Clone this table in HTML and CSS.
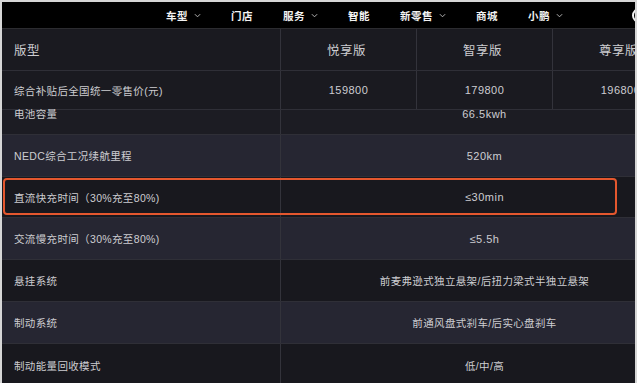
FILE: index.html
```html
<!DOCTYPE html>
<html lang="zh-CN">
<head>
<meta charset="utf-8">
<title>参数配置</title>
<link rel="stylesheet" href="styles.css">
</head>
<body>
<div class="frame">
  <nav class="nav">
    <span class="nav-item">车型<svg class="chev" viewBox="0 0 8 5"><polyline points="1,1 4,4 7,1"/></svg></span>
    <span class="nav-item">门店</span>
    <span class="nav-item">服务<svg class="chev" viewBox="0 0 8 5"><polyline points="1,1 4,4 7,1"/></svg></span>
    <span class="nav-item">智能</span>
    <span class="nav-item">新零售<svg class="chev" viewBox="0 0 8 5"><polyline points="1,1 4,4 7,1"/></svg></span>
    <span class="nav-item">商城</span>
    <span class="nav-item">小鹏<svg class="chev" viewBox="0 0 8 5"><polyline points="1,1 4,4 7,1"/></svg></span>
    <span class="nav-icon"></span>
  </nav>
  <div class="table">
    <div class="row cols head">
      <div class="cell label big">版型</div>
      <div class="cell val big">悦享版</div>
      <div class="cell val big">智享版</div>
      <div class="cell val big">尊享版</div>
    </div>
    <div class="row cols price">
      <div class="cell label">综合补贴后全国统一零售价(元)</div>
      <div class="cell val num">159800</div>
      <div class="cell val num">179800</div>
      <div class="cell val num">196800</div>
    </div>
    <div class="row span battery">
      <div class="cell label">电池容量</div>
      <div class="cell val num">66.5kwh</div>
    </div>
    <div class="row span light">
      <div class="cell label">NEDC综合工况续航里程</div>
      <div class="cell val num">520km</div>
    </div>
    <div class="row span dark hl">
      <div class="cell label">直流快充时间（30%充至80%)</div>
      <div class="cell val num">≤30min</div>
      <div class="highlight"></div>
    </div>
    <div class="row span light">
      <div class="cell label">交流慢充时间（30%充至80%)</div>
      <div class="cell val num">≤5.5h</div>
    </div>
    <div class="row span dark">
      <div class="cell label">悬挂系统</div>
      <div class="cell val">前麦弗逊式独立悬架/后扭力梁式半独立悬架</div>
    </div>
    <div class="row span light">
      <div class="cell label">制动系统</div>
      <div class="cell val">前通风盘式刹车/后实心盘刹车</div>
    </div>
    <div class="row span dark last">
      <div class="cell label">制动能量回收模式</div>
      <div class="cell val">低/中/高</div>
    </div>
  </div>
</div>
</body>
</html>
```
FILE: styles.css
```css
* { box-sizing: border-box; }
html, body {
  margin: 0;
  padding: 0;
  background: #18181e;
}
body {
  font-family: "Liberation Sans", "Noto Sans CJK SC", sans-serif;
  color: #cdcdd1;
}
.frame {
  width: 637px;
  height: 383px;
  overflow: hidden;
  border-top: 2px solid #d6d6d6;
  border-left: 2px solid #d6d6d6;
  border-right: 2px solid #d6d6d6;
  background: #18181e;
}
.nav {
  height: 27px;
  background: #000;
  border-bottom: 1px solid #2c2c30;
  display: flex;
  align-items: center;
  gap: 30px;
  padding-left: 164px;
  overflow: hidden;
}
.nav-item {
  display: flex;
  align-items: center;
  gap: 6px;
  color: #f2f2f2;
  font-size: 10.5px;
  font-weight: 700;
  letter-spacing: 0.5px;
  white-space: nowrap;
}
.chev {
  width: 7px;
  height: 5px;
  fill: none;
  stroke: #b8b8b8;
  stroke-width: 1.1;
}
.nav-icon {
  margin-left: auto;
  margin-right: -12px;
  width: 15px;
  height: 15px;
  border-radius: 50%;
  border: 2px solid #f4f4f4;
  flex: none;
}
.table {
  width: 686px;
}
.row {
  display: grid;
  border-bottom: 1px solid #2f2f37;
  position: relative;
}
.cols {
  grid-template-columns: 278px 136px 136px 136px;
  background: #1a1a20;
}
.span {
  grid-template-columns: 278px 408px;
}
.cell {
  display: flex;
  align-items: center;
  font-size: 10.5px;
  letter-spacing: 0.35px;
  white-space: nowrap;
}
.num {
  font-size: 11px;
  letter-spacing: 0.5px;
}
.label {
  padding-left: 12px;
}
.val {
  justify-content: center;
  border-left: 1px solid #33333b;
}
.big {
  font-size: 12.5px;
  letter-spacing: 0.5px;
}
.head { height: 42px; }
.head .val { padding-right: 4px; }
.price { height: 39px; }
.battery {
  height: 25px;
  background: #1c1c23;
}
.battery .cell {
  align-items: flex-start;
  line-height: 8px;
}
.light {
  height: 42px;
  background: #262632;
}
.dark {
  height: 42px;
  background: #18181e;
}
.row.hl { height: 41px; }
.last { border-bottom: none; }
.highlight {
  position: absolute;
  left: 1px;
  top: 1px;
  width: 614px;
  height: 37px;
  border: 2px solid #e4572e;
  border-radius: 4px;
}
```
